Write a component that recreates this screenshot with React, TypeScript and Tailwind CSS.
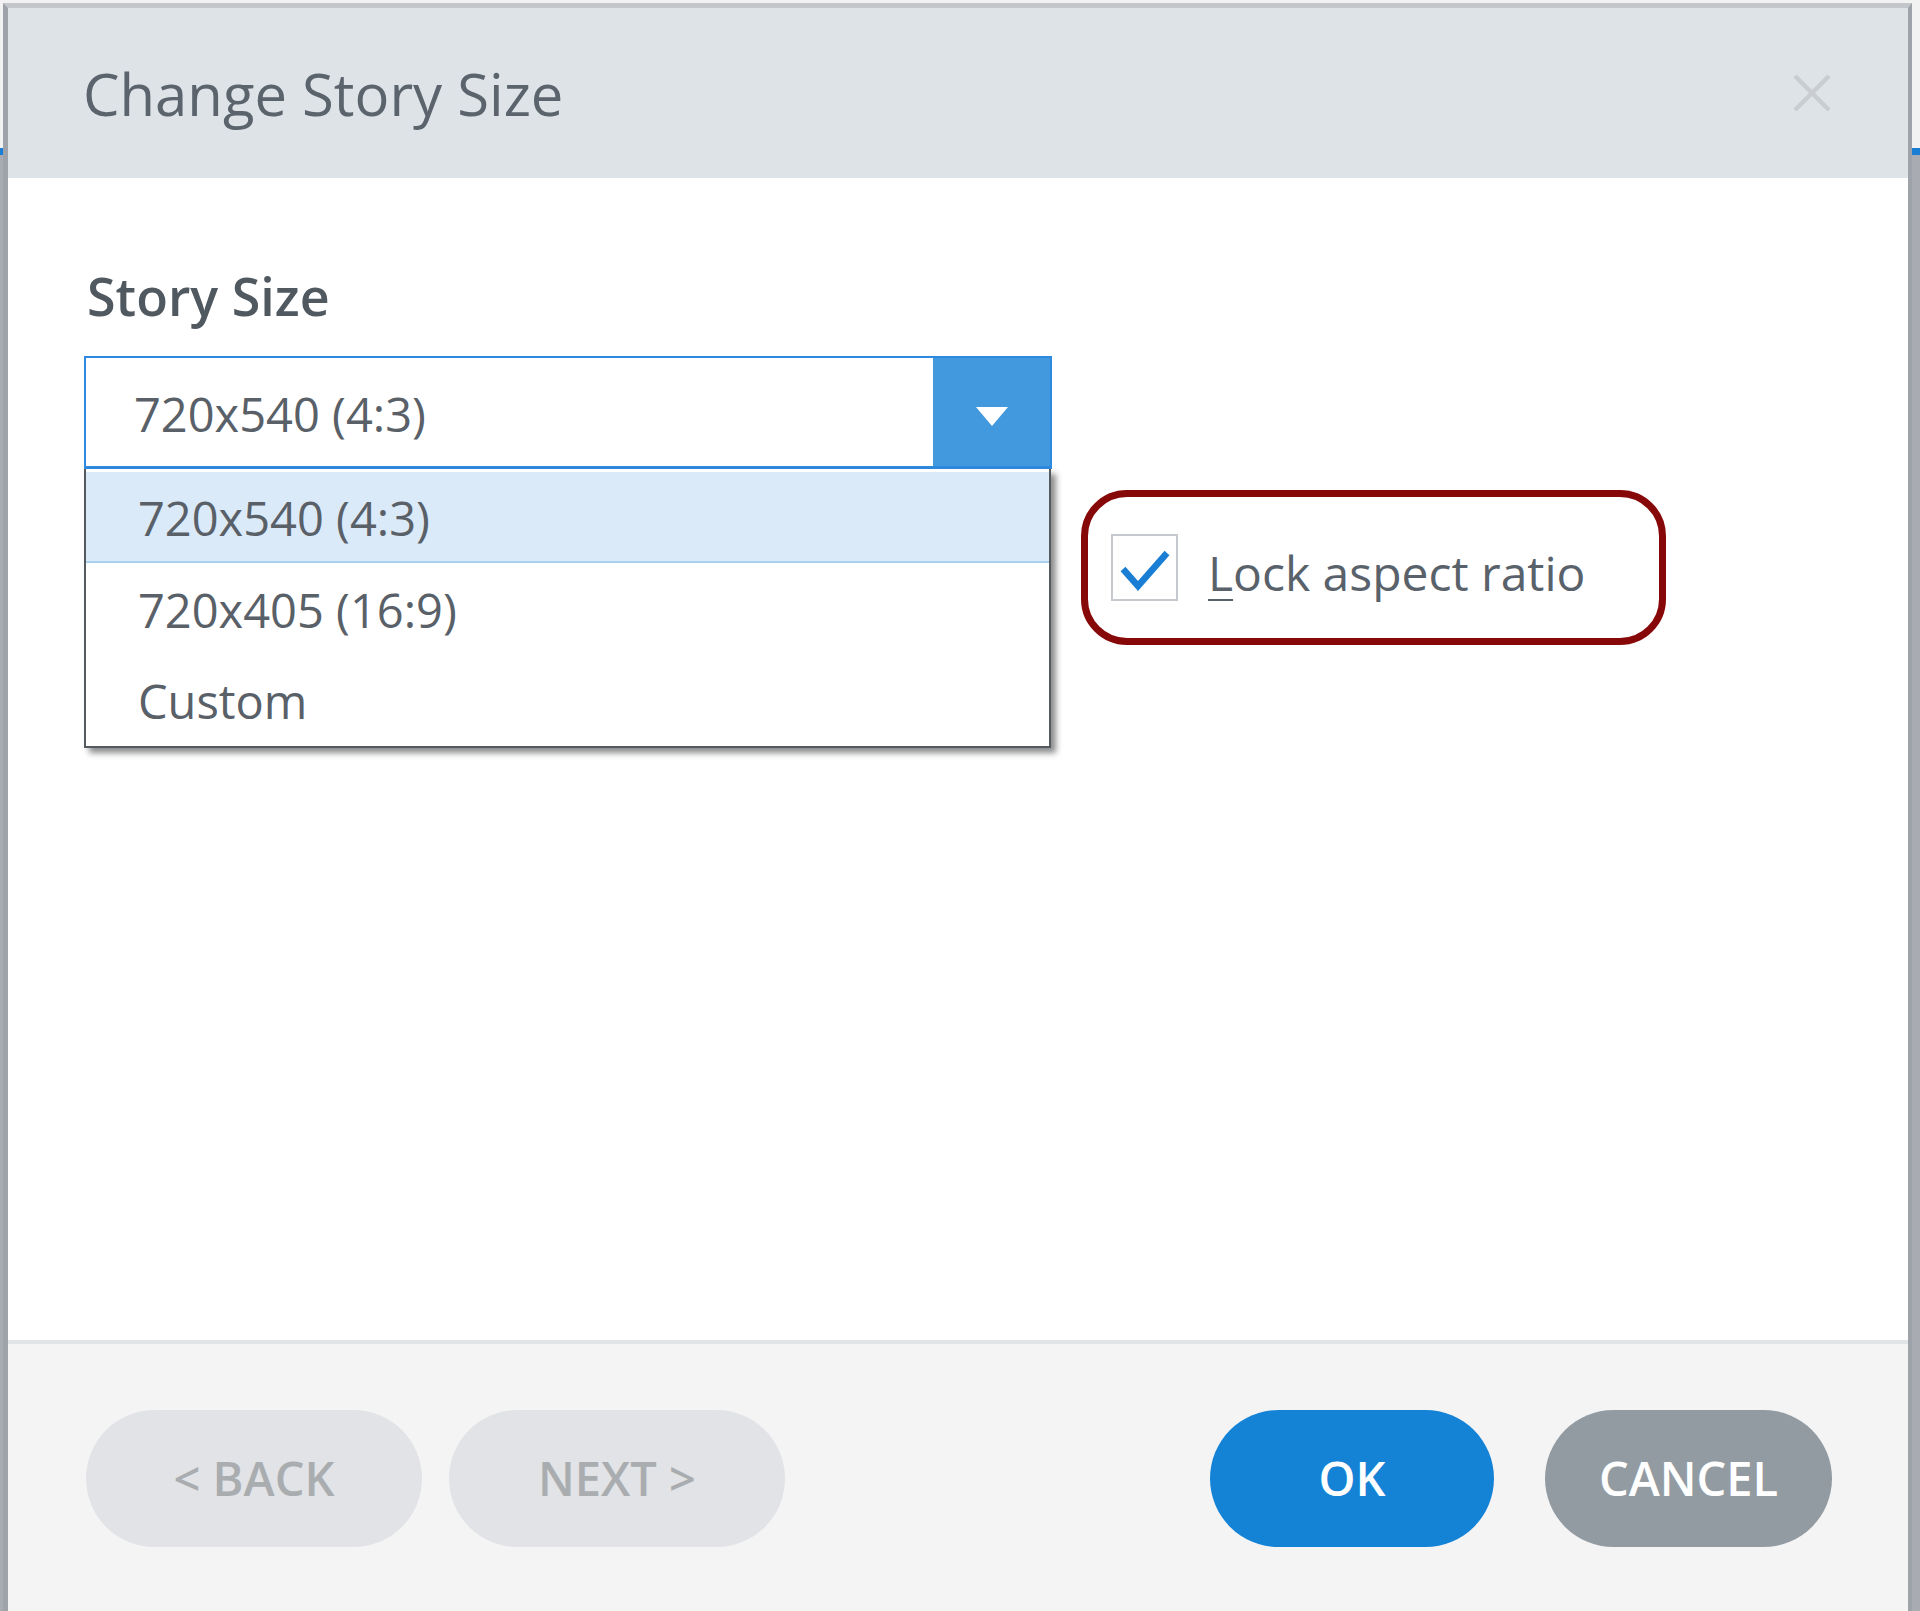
import { useState } from 'react';

const OPTIONS = ['720x540 (4:3)', '720x405 (16:9)', 'Custom'];

function CloseIcon() {
  return (
    <svg width="40" height="38" viewBox="0 0 40 38" className="block">
      <line x1="3" y1="2" x2="37" y2="36" stroke="#c9cdd1" strokeWidth="4.5" />
      <line x1="37" y1="2" x2="3" y2="36" stroke="#c9cdd1" strokeWidth="4.5" />
    </svg>
  );
}

function StorySelect() {
  const [value, setValue] = useState(OPTIONS[0]);

  return (
    <div className="relative w-[968px] shrink-0">
      <div className="flex h-[113px] border-2 border-b-[3px] border-[#2e8ade] bg-white">
        <div className="flex flex-1 items-center pl-[48px] pt-[4px] text-[47px] text-[#596068]">{value}</div>
        <div className="flex w-[117px] items-center justify-center bg-[#4399dd] pt-[8px]">
          <svg width="32" height="19" viewBox="0 0 32 19">
            <polygon points="0,0 32,0 16,19" fill="#ffffff" />
          </svg>
        </div>
      </div>

      {/* open list */}
      <div className="absolute left-0 top-[113px] z-10 w-[967px] border-2 border-t-0 border-[#555a5f] bg-white pt-[3px] pb-[1px] shadow-[5px_5px_6px_rgba(0,0,0,0.45)]">
        {OPTIONS.map((opt, i) => (
          <div
            key={opt}
            onClick={() => setValue(opt)}
            className={
              i === 0
                ? 'flex h-[91px] items-center border-b-2 border-[#a9d0f0] bg-[#dbeaf8] pl-[52px] pt-[3px] text-[47px] text-[#596068]'
                : 'flex h-[91px] items-center pl-[52px] pt-[3px] text-[47px] text-[#596068]'
            }
          >
            {opt}
          </div>
        ))}
      </div>
    </div>
  );
}

function LockAspect() {
  const [checked, setChecked] = useState(true);

  return (
    <div className="ml-[29px] mt-[134px] flex h-[155px] w-[585px] items-center rounded-[46px] border-[7px] border-[#870808] pl-[23px]">
      <button
        onClick={() => setChecked(!checked)}
        className="flex h-[67px] w-[67px] items-center justify-center border-2 border-[#c6cacf] bg-white"
      >
        {checked && (
          <svg width="63" height="63" viewBox="0 0 63 63">
            <polyline points="10,33 25,50 54,17" fill="none" stroke="#1a7fd4" strokeWidth="6.5" />
          </svg>
        )}
      </button>
      <span className="ml-[30px] pt-[10px] text-[48px] text-[#59626b]">
        <span className="underline decoration-2 underline-offset-[8px]">L</span>ock aspect ratio
      </span>
    </div>
  );
}

export default function App() {
  return (
    <div
      className="h-[1611px] w-[1920px] overflow-hidden bg-[linear-gradient(to_bottom,#f2f2f2_0,#f2f2f2_148px,#1a7fd4_148px,#1a7fd4_155px,#a8acb2_155px)] pl-[3px] pt-[3px]"
      style={{ fontFamily: '"Open Sans", "Noto Sans", sans-serif' }}
    >
      <div className="flex h-[1608px] w-[1909px] flex-col border-l-[5px] border-r-[4px] border-t-[5px] border-l-[#9ea3a9] border-r-[#9ea3a9] border-t-[#c3c6ca] bg-white">
        {/* header */}
        <div className="flex h-[170px] items-center justify-between bg-[#dee3e7] pl-[75px] pr-[76px]">
          <h1 className="text-[58px] text-[#5b646d]">Change Story Size</h1>
          <CloseIcon />
        </div>

        {/* body */}
        <div className="flex-1 pl-[76px]">
          <div className="mt-[88px] pl-[3px] text-[52px] leading-[60px] font-semibold text-[#505860]">Story Size</div>
          <div className="mt-[30px] flex items-start">
            <StorySelect />
            <LockAspect />
          </div>
        </div>

        {/* footer */}
        <div className="flex h-[271px] items-start justify-between border-t-[4px] border-[#e2e5e8] bg-[#f4f4f4] pl-[78px] pr-[76px] pt-[66px]">
          <div className="flex gap-[27px]">
            <button className="h-[137px] w-[336px] rounded-full bg-[#e1e3e6] text-[47px] font-semibold text-[#aaadb0]">
              &lt; BACK
            </button>
            <button className="h-[137px] w-[336px] rounded-full bg-[#e1e3e6] text-[47px] font-semibold text-[#aaadb0]">
              NEXT &gt;
            </button>
          </div>
          <div className="flex gap-[51px]">
            <button className="h-[137px] w-[284px] rounded-full bg-[#1483d6] text-[47px] font-semibold text-white">
              OK
            </button>
            <button className="h-[137px] w-[287px] rounded-full bg-[#939ba2] text-[47px] font-semibold text-white">
              CANCEL
            </button>
          </div>
        </div>
      </div>
    </div>
  );
}
